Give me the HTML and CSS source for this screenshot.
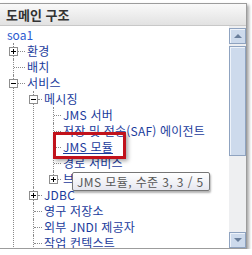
FILE: index.html
```html
<!doctype html>
<html lang="ko">
<head>
    <meta charset="UTF-8">
    <title>도메인 구조</title>
    <link rel="stylesheet" href="styles.css">
</head>
<body>
<div class="panel">
    <div class="head">도메인 구조</div>
    <div class="main">
        <div class="tree">
            <div class="root">soa1</div>
            <ul class="lvl1">
                <li>
                    <div class="row"><span class="lead"><svg class="exp" width="9" height="9" viewBox="0 0 9 9"><rect x=".5" y=".5" width="8" height="8" fill="#fff" stroke="#8e8e8e"/><path d="M2 4.5h5M4.5 2v5" stroke="#000"/></svg><i class="dash"></i></span><a class="lbl">환경</a></div>
                </li>
                <li>
                    <div class="row"><span class="lead"><i class="dash bare"></i></span><a class="lbl">배치</a></div>
                </li>
                <li>
                    <div class="row"><span class="lead"><svg class="exp" width="9" height="9" viewBox="0 0 9 9"><rect x=".5" y=".5" width="8" height="8" fill="#fff" stroke="#8e8e8e"/><path d="M2 4.5h5" stroke="#000"/></svg><i class="dash"></i></span><a class="lbl">서비스</a></div>
                    <ul class="lvl2">
                        <li>
                            <div class="row"><span class="lead"><svg class="exp" width="9" height="9" viewBox="0 0 9 9"><rect x=".5" y=".5" width="8" height="8" fill="#fff" stroke="#8e8e8e"/><path d="M2 4.5h5" stroke="#000"/></svg><i class="dash"></i></span><a class="lbl">메시징</a></div>
                            <ul class="lvl3">
                                <li><div class="row"><span class="lead"><i class="dash bare"></i></span><a class="lbl">JMS 서버</a></div></li>
                                <li><div class="row"><span class="lead"><i class="dash bare"></i></span><a class="lbl">저장 및 전송(SAF) 에이전트</a></div></li>
                                <li><div class="row"><span class="lead"><i class="dash bare"></i></span><a class="lbl on">JMS 모듈</a></div></li>
                                <li><div class="row"><span class="lead"><i class="dash bare"></i></span><a class="lbl">경로 서비스</a></div></li>
                                <li class="last"><div class="row"><span class="lead"><svg class="exp" width="9" height="9" viewBox="0 0 9 9"><rect x=".5" y=".5" width="8" height="8" fill="#fff" stroke="#8e8e8e"/><path d="M2 4.5h5M4.5 2v5" stroke="#000"/></svg><i class="dash"></i></span><a class="lbl">브리지</a></div></li>
                            </ul>
                        </li>
                        <li>
                            <div class="row"><span class="lead"><svg class="exp" width="9" height="9" viewBox="0 0 9 9"><rect x=".5" y=".5" width="8" height="8" fill="#fff" stroke="#8e8e8e"/><path d="M2 4.5h5M4.5 2v5" stroke="#000"/></svg><i class="dash"></i></span><a class="lbl">JDBC</a></div>
                        </li>
                        <li><div class="row"><span class="lead"><i class="dash bare"></i></span><a class="lbl">영구 저장소</a></div></li>
                        <li><div class="row"><span class="lead"><i class="dash bare"></i></span><a class="lbl">외부 JNDI 제공자</a></div></li>
                        <li><div class="row"><span class="lead"><i class="dash bare"></i></span><a class="lbl">작업 컨텍스트</a></div></li>
                    </ul>
                </li>
            </ul>
        </div>
        <div class="scroll">
            <div class="btn"><i class="up"></i></div>
            <div class="thumb"></div>
            <div class="track"></div>
            <div class="btn"><i class="down"></i></div>
        </div>
    </div>
    <div class="mark"></div>
    <div class="tip">JMS 모듈, 수준 3, 3 / 5</div>
</div>
</body>
</html>
```

FILE: styles.css
```css
*{
    margin:0;
    padding:0;
    list-style:none;
    box-sizing:border-box;
}
body{
    background:#fff;
    font-family:"Noto Sans CJK KR",sans-serif;
}
.panel{
    width:247px;
    height:246px;
    margin-top:3px;
    border:1px solid #9c9c9c;
    border-left:0;
    box-shadow:2px 2px 3px rgba(0,0,0,.35);
    background:#fff;
    display:flex;
    flex-direction:column;
    position:relative;
}
.head{
    height:22px;
    border-bottom:1px solid #c8c8c8;
    background:linear-gradient(#f9f9f9,#e2e2e2);
    font-size:13px;
    font-weight:bold;
    color:#333;
    line-height:21px;
    padding-left:6px;
}
.main{
    flex:1;
    display:flex;
    min-height:0;
}
.tree{
    flex:1;
    overflow:hidden;
    padding-left:7px;
    padding-top:1px;
    font-size:12px;
    line-height:16px;
}
.root{
    height:16px;
    color:#2b5ad0;
}
.lvl1{
    margin-left:6px;
}
.lvl2,.lvl3{
    padding-left:20px;
}
.tree li{
    position:relative;
}
.tree li::before{
    content:"";
    position:absolute;
    left:0;
    top:0;
    bottom:0;
    border-left:1px dotted #8a8a8a;
}
.tree li.last::before{
    bottom:auto;
    height:8px;
}
.row{
    height:16px;
    display:flex;
    align-items:center;
    white-space:nowrap;
}
.lead{
    display:flex;
    align-items:center;
    height:16px;
    margin-left:-4px;
    width:18px;
}
.lvl2 .lead{
    width:15px;
}
.lvl3 .lead{
    width:14px;
}
.exp{
    position:relative;
    flex:none;
}
.dash{
    flex:1;
    height:0;
    border-top:1px dotted #8a8a8a;
    margin-right:2px;
}
.dash.bare{
    margin-left:5px;
}
.lbl{
    color:#1a3b9c;
    text-decoration:none;
    letter-spacing:.2px;
}
.lbl.on{
    text-decoration:underline;
}
.scroll{
    width:17px;
    background:#eeeff1;
    display:flex;
    flex-direction:column;
    padding-top:2px;
}
.btn{
    height:16px;
    border:1px solid #8fa3c0;
    background:#cddaec;
    box-shadow:inset 1px 1px 0 #eef3fa;
    display:flex;
    align-items:center;
    justify-content:center;
}
.thumb{
    height:110px;
    margin-top:2px;
    border:1px solid #8fa3c0;
    background:#cddaec;
    box-shadow:inset 1px 1px 0 #eef3fa;
}
.track{
    flex:1;
}
.up{
    border:4px solid transparent;
    border-top:0;
    border-bottom:4px solid #6a7f9c;
}
.down{
    border:4px solid transparent;
    border-bottom:0;
    border-top:4px solid #6a7f9c;
}
.mark{
    position:absolute;
    left:53px;
    top:128px;
    width:73px;
    height:27px;
    border:3px solid #c1121b;
    box-shadow:2px 2px 4px rgba(0,0,0,.35);
}
.tip{
    position:absolute;
    left:72px;
    top:168px;
    width:138px;
    height:19px;
    border:1px solid #767676;
    border-radius:2px;
    background:linear-gradient(#fff,#e6e7f0);
    box-shadow:1px 2px 2px rgba(0,0,0,.3);
    font-size:12px;
    line-height:17px;
    color:#575757;
    padding-left:4px;
    letter-spacing:.4px;
    white-space:nowrap;
}
```
